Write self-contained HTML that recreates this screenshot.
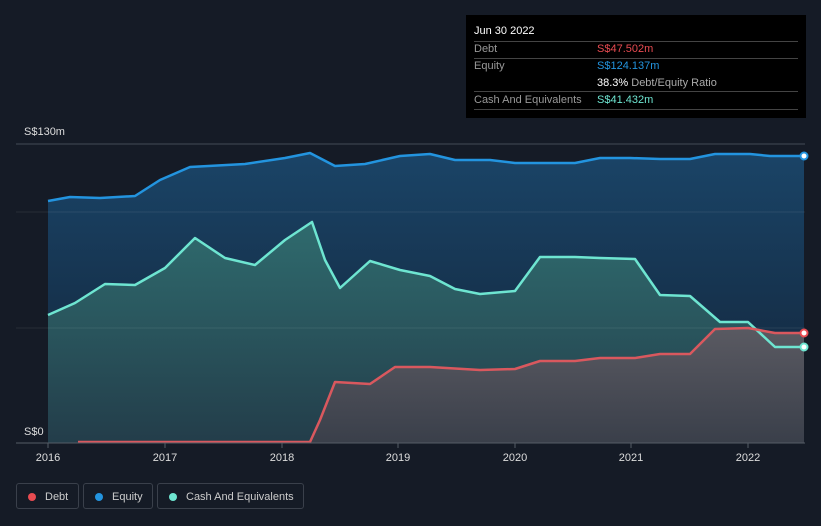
<!DOCTYPE html>
<html><head><style>
body{margin:0;background:#151b26;font-family:"Liberation Sans",sans-serif;width:821px;height:526px;overflow:hidden;position:relative}
.tip{position:absolute;left:466px;top:15px;width:340px;height:103px;background:#000;color:#fff;font-size:11px}
.tip .r{position:absolute;left:8px;right:8px;border-top:1px solid #444}
.lab{position:absolute;color:#999;font-size:11px}
.leg{position:absolute;top:483px;height:26px;border:1px solid #3a404b;border-radius:3px;color:#ccc;font-size:11px;line-height:26px;box-sizing:border-box}
.leg i{position:absolute;left:11px;top:9px;width:8px;height:8px;border-radius:50%}
</style></head><body>
<svg width="821" height="526" style="position:absolute;left:0;top:0">
<defs>
<linearGradient id="eq" x1="0" y1="0" x2="0" y2="1"><stop offset="0" stop-color="#1a4467"/><stop offset="1" stop-color="#122236"/></linearGradient>
<linearGradient id="ca" x1="0" y1="0" x2="0" y2="1"><stop offset="0" stop-color="#2f6b6e"/><stop offset="1" stop-color="#233d4a"/></linearGradient>
<linearGradient id="de" x1="0" y1="0" x2="0" y2="1"><stop offset="0" stop-color="#5a5a62"/><stop offset="1" stop-color="#3a3f4a"/></linearGradient>
</defs>
<line x1="16" y1="144" x2="805" y2="144" stroke="#444b56"/>
<path d="M48,201 L70,197 100,198 135,196 160,180 190,167 245,164 285,158 310,153 335,166 365,164 400,156 430,154 455,160 490,160 515,163 575,163 600,158 630,158 660,159 690,159 715,154 750,154 770,156 804,156 L804,443 48,443Z" fill="url(#eq)"/>
<path d="M48,315 L75,303 105,284 135,285 165,268 195,238 225,258 255,265 285,240 312,222 325,260 340,288 370,261 400,270 430,276 455,289 480,294 515,291 540,257 575,257 600,258 635,259 660,295 690,296 720,322 748,322 775,347 804,347 L804,443 48,443Z" fill="url(#ca)"/>
<line x1="16" y1="212" x2="805" y2="212" stroke="#ffffff" stroke-opacity="0.08"/>
<line x1="16" y1="328" x2="805" y2="328" stroke="#ffffff" stroke-opacity="0.08"/>
<path d="M78,442 L310,442 320,420 335,382 370,384 395,367 430,367 480,370 515,369 540,361 575,361 600,358 635,358 660,354 690,354 715,329 748,328 775,333 804,333 L804,443 78,443Z" fill="url(#de)"/>
<path d="M48,201 L70,197 100,198 135,196 160,180 190,167 245,164 285,158 310,153 335,166 365,164 400,156 430,154 455,160 490,160 515,163 575,163 600,158 630,158 660,159 690,159 715,154 750,154 770,156 804,156" fill="none" stroke="#2394df" stroke-width="2.5" stroke-linejoin="round"/>
<path d="M48,315 L75,303 105,284 135,285 165,268 195,238 225,258 255,265 285,240 312,222 325,260 340,288 370,261 400,270 430,276 455,289 480,294 515,291 540,257 575,257 600,258 635,259 660,295 690,296 720,322 748,322 775,347 804,347" fill="none" stroke="#6ee5d1" stroke-width="2.5" stroke-linejoin="round"/>
<path d="M78,442 L310,442 320,420 335,382 370,384 395,367 430,367 480,370 515,369 540,361 575,361 600,358 635,358 660,354 690,354 715,329 748,328 775,333 804,333" fill="none" stroke="#d9585e" stroke-width="2.5" stroke-linejoin="round"/>
<line x1="16" y1="443" x2="805" y2="443" stroke="#555c66"/>
<g stroke="#555c66"><line x1="48" y1="443" x2="48" y2="448"/><line x1="165" y1="443" x2="165" y2="448"/><line x1="282" y1="443" x2="282" y2="448"/><line x1="398" y1="443" x2="398" y2="448"/><line x1="515" y1="443" x2="515" y2="448"/><line x1="631" y1="443" x2="631" y2="448"/><line x1="748" y1="443" x2="748" y2="448"/></g>
<circle cx="804" cy="156" r="3.5" fill="#fff" stroke="#2394df" stroke-width="2"/>
<circle cx="804" cy="333" r="3.5" fill="#fff" stroke="#e84b51" stroke-width="2"/>
<circle cx="804" cy="347" r="3.5" fill="#fff" stroke="#6ee5d1" stroke-width="2"/>
<g fill="#ddd" font-size="11" font-family="Liberation Sans" text-anchor="middle">
<text x="48" y="461">2016</text><text x="165" y="461">2017</text><text x="282" y="461">2018</text><text x="398" y="461">2019</text><text x="515" y="461">2020</text><text x="631" y="461">2021</text><text x="748" y="461">2022</text></g>
<text x="24" y="135" fill="#ddd" font-size="11" font-family="Liberation Sans">S$130m</text>
<text x="24" y="435" fill="#ddd" font-size="11" font-family="Liberation Sans">S$0</text>
</svg>
<div class="tip">
<div style="position:absolute;left:8px;top:10px">Jun 30 2022</div>
<div class="r" style="top:26px"></div><div class="r" style="top:43px"></div><div class="r" style="top:76px"></div><div class="r" style="top:94px"></div>
<div class="lab" style="left:8px;top:28px">Debt</div><div style="position:absolute;left:131px;top:28px;color:#e84b51">S$47.502m</div>
<div class="lab" style="left:8px;top:45px">Equity</div><div style="position:absolute;left:131px;top:45px;color:#2394df">S$124.137m</div>
<div style="position:absolute;left:131px;top:62px">38.3% <span style="color:#aaa">Debt/Equity Ratio</span></div>
<div class="lab" style="left:8px;top:79px">Cash And Equivalents</div><div style="position:absolute;left:131px;top:79px;color:#6ee5d1">S$41.432m</div>
</div>
<div class="leg" style="left:16px;width:63px"><i style="background:#e84b51"></i><span style="position:absolute;left:28px">Debt</span></div>
<div class="leg" style="left:83px;width:70px"><i style="background:#2394df"></i><span style="position:absolute;left:28px">Equity</span></div>
<div class="leg" style="left:157px;width:147px"><i style="background:#6ee5d1"></i><span style="position:absolute;left:28px">Cash And Equivalents</span></div>
</body></html>
